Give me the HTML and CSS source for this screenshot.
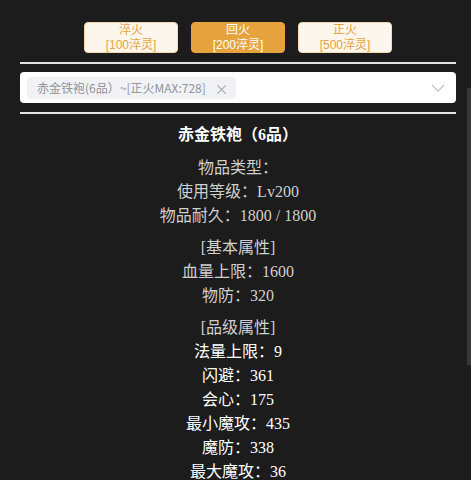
FILE: index.html
```html
<!DOCTYPE html>
<html lang="zh-CN">
<head>
<meta charset="utf-8">
<title>装备</title>
<link rel="stylesheet" href="styles.css">
</head>
<body>
<div class="page">
  <div class="btns">
    <button class="btn"><span class="l">淬火</span><span class="l">[100淬灵]</span></button>
    <button class="btn active"><span class="l">回火</span><span class="l">[200淬灵]</span></button>
    <button class="btn"><span class="l">正火</span><span class="l">[500淬灵]</span></button>
  </div>
  <div class="rule"></div>
  <div class="select">
    <span class="tag">赤金铁袍(6品）~[正火MAX:728] <span class="x">×</span></span>
    <svg class="arrow" width="14" height="8" viewBox="0 0 14 8"><path d="M1 1 L7 7 L13 1" fill="none" stroke="#c0c4cc" stroke-width="1.3"/></svg>
  </div>
  <div class="rule"></div>
  <div class="info">
    <div class="title">赤金铁袍（6品）</div>
    <div class="sec">
      <div>物品类型：</div>
      <div>使用等级：Lv200</div>
      <div>物品耐久：1800 / 1800</div>
    </div>
    <div class="sec">
      <div>[基本属性]</div>
      <div>血量上限：1600</div>
      <div>物防：320</div>
    </div>
    <div class="sec">
      <div>[品级属性]</div>
      <div class="hi">法量上限：9</div>
      <div class="hi">闪避：361</div>
      <div class="hi">会心：175</div>
      <div class="hi">最小魔攻：435</div>
      <div class="hi">魔防：338</div>
      <div class="hi">最大魔攻：36</div>
    </div>
  </div>
</div>
<div class="scroll"></div>
</body>
</html>
```
FILE: styles.css
```css
html, body {
  margin: 0;
  background: #1c1c1c;
  overflow: hidden;
  height: 480px;
}
.page {
  width: 436px;
  margin-left: 20px;
  font-family: "Liberation Serif", "Noto Sans CJK SC", serif;
}
.btns {
  display: flex;
  justify-content: center;
  gap: 13px;
  padding-top: 22px;
}
.btn {
  width: 94px;
  height: 31px;
  padding: 0;
  border: 1px solid #f5dab1;
  background: #fdf6ec;
  color: #e6a23c;
  border-radius: 4px;
  font-family: "Liberation Sans", "Noto Sans CJK SC", sans-serif;
  font-size: 12px;
  display: flex;
  flex-direction: column;
  align-items: center;
  justify-content: center;
}
.l {
  display: block;
  height: 15px;
  line-height: 15px;
}
.btn.active {
  background: #e6a23c;
  border-color: #e6a23c;
  color: #fff;
}
.rule {
  height: 2px;
  background: #e4e4e4;
  margin-top: 9px;
}
.select {
  margin-top: 8px;
  height: 31px;
  background: #fff;
  border-radius: 4px;
  display: flex;
  align-items: center;
  padding: 0 11px 0 7px;
  box-sizing: border-box;
  justify-content: space-between;
}
.tag {
  height: 22px;
  display: flex;
  align-items: center;
  background: #f0f2f5;
  color: #909399;
  border-radius: 4px;
  padding: 0 8px 0 10px;
  font-family: "Noto Sans CJK SC", sans-serif;
  font-size: 12px;
  white-space: pre;
}
.x {
  margin-left: 6px;
  font-size: 14px;
  color: #a8abb2;
}
.arrow {
  display: block;
}
.info {
  margin-top: 9px;
  text-align: center;
  color: #cfcfcf;
  font-size: 16px;
  line-height: 24px;
}
.title {
  color: #fff;
  font-weight: bold;
  margin-bottom: 9px;
}
.sec + .sec {
  margin-top: 8px;
}
.hi {
  color: #fff;
}
.scroll {
  position: absolute;
  left: 467px;
  top: 88px;
  width: 4px;
  height: 277px;
  background: #383838;
}
```
